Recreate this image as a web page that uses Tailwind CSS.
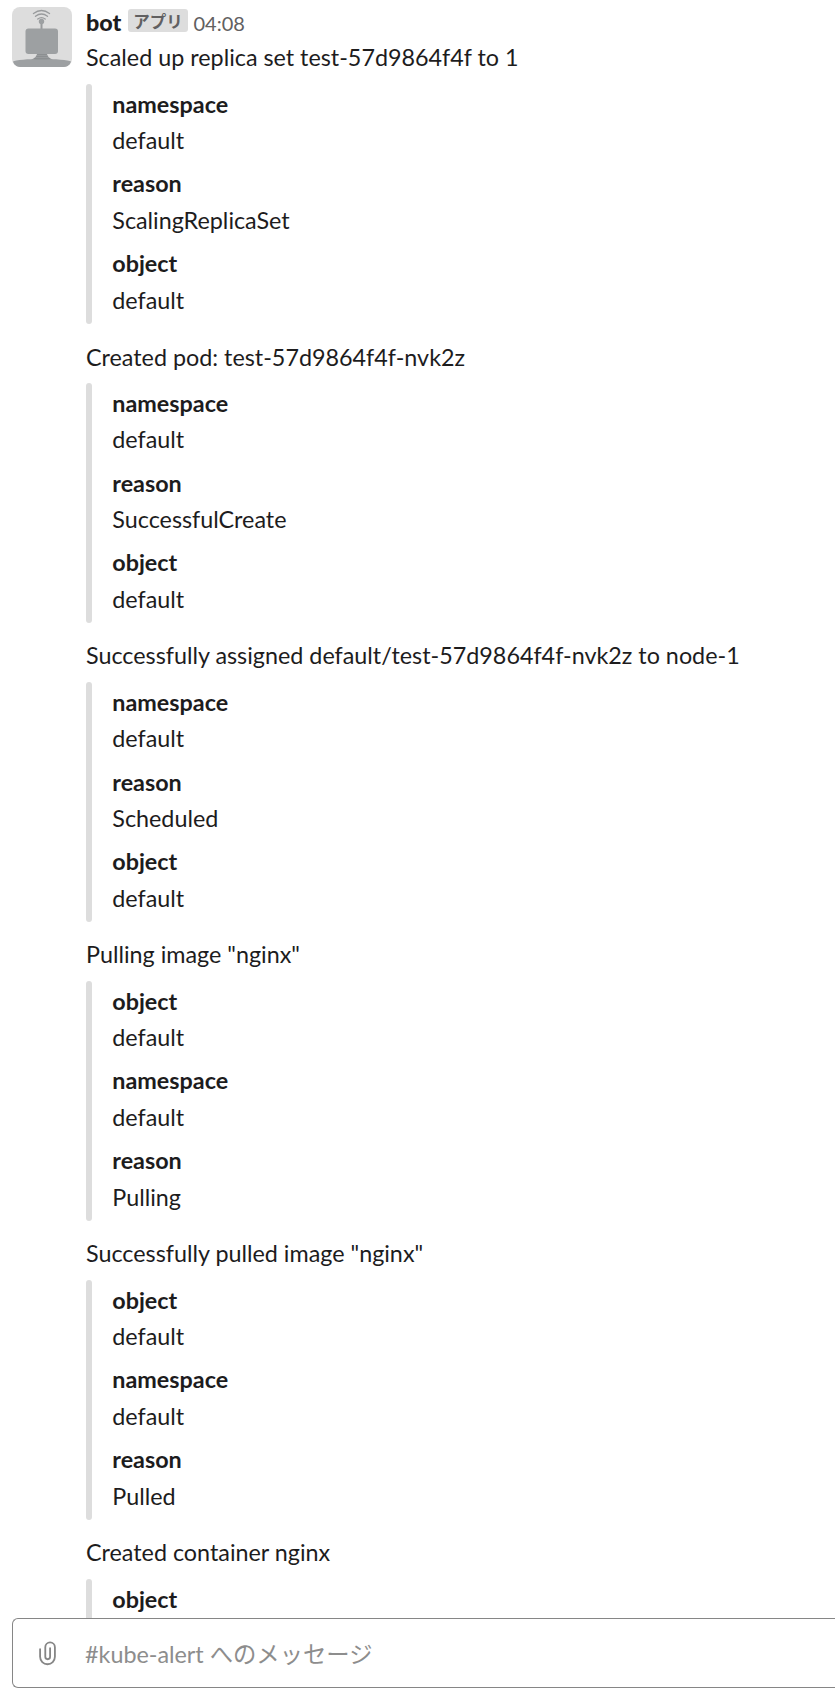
<!DOCTYPE html>
<html lang="ja">
<head>
<meta charset="utf-8">
<title>kube-alert</title>
<script src="https://cdn.jsdelivr.net/npm/@tailwindcss/browser@4"></script>
</head>
<body class="bg-white">
<div class="flex h-[1708px] w-[835px] flex-col overflow-hidden font-['Lato','Noto_Sans_CJK_JP',sans-serif] text-[23.33px] leading-[33px] text-[#1d1c1d]">
  <main class="flex h-[1618px] shrink-0 gap-3.5 overflow-hidden pl-3 pt-[7px]">
    <svg class="size-[60px] shrink-0 rounded-lg bg-[#dddddd]" viewBox="0 0 60 60" fill="none">
      <g stroke="#999b9d" stroke-width="1.3" stroke-linecap="round">
        <path d="M21.500 6.500Q29.500 .500 37.500 6.500M23.500 9.300Q29.500 4.700 35.500 9.300M25.800 12Q29.500 9.200 33.200 12"/>
        <path d="M29.500 14v9" stroke-width="2"/>
      </g>
      <circle cx="29.500" cy="14.500" r="2.700" fill="#9da0a2"/>
      <rect x="13.500" y="21.500" width="32.500" height="25.500" rx="3" fill="#9da0a2"/>
      <path d="M1 54.500C5 51 54 51 59 54.500C58.500 57 56.500 59 54 60H6C3.500 59 1.500 57 1 54.500Z" fill="#9da0a2"/>
      <path d="M25 47H35C35.500 50 38 51.500 41 52.500H19C22 51.500 24.500 50 25 47Z" fill="#8c8f91"/>
      <path d="M24.500 48.500h11M23 50.500h14" stroke="#a3a5a7" stroke-width=".6"/>
    </svg>
    <div class="flex-1" id="feed">
      <div class="flex h-[34px] items-start">
        <b class="-mt-[1px] w-[35px] text-[23.33px] font-black">bot</b>
        <span class="ml-[7px] mt-[2px] flex h-[23px] w-[60px] items-center justify-center rounded-[3px] bg-[#dddddd] pt-[3px] text-[16.5px] font-bold text-[#616061]">アプリ</span>
        <time class="ml-[5.5px] text-[20px] text-[#616061]">04:08</time>
      </div>
    </div>
  </main>
  <footer class="ml-3 flex h-[70px] shrink-0 items-center rounded-l-[6px] border border-r-0 border-[#868686] text-[#8d8d8d]">
    <svg class="ml-[25px] mt-[1px] h-[25px] w-[19px]" viewBox="0 0 19 26" fill="none" stroke="#868686" stroke-width="1.900" stroke-linecap="round"><path d="M1.800 8.500V16.500a7.700 7.700 0 0 0 15.400 0V6.500a5 5 0 0 0-10 0V16.500a2.500 2.500 0 0 0 5 0V7.500"/></svg>
    <span class="ml-[28px] mt-[2px]">#kube-alert へのメッセージ</span>
  </footer>
</div>
<script>
  const messages = [
    ['Scaled up replica set test-57d9864f4f to 1', [['namespace','default'],['reason','ScalingReplicaSet'],['object','default']]],
    ['Created pod: test-57d9864f4f-nvk2z', [['namespace','default'],['reason','SuccessfulCreate'],['object','default']]],
    ['Successfully assigned default/test-57d9864f4f-nvk2z to node-1', [['namespace','default'],['reason','Scheduled'],['object','default']]],
    ['Pulling image "nginx"', [['object','default'],['namespace','default'],['reason','Pulling']]],
    ['Successfully pulled image "nginx"', [['object','default'],['namespace','default'],['reason','Pulled']]],
    ['Created container nginx', [['object','']]]
  ];
  const tight = { rows: ['h-[79px]', 'h-[80px]', 'h-[80px]'], gaps: ['mt-[3px]', 'mt-[4px]', 'mt-[4px]'] };
  const even = { rows: ['h-[80px]', 'h-[79px]', 'h-[80px]'], gaps: ['mt-[3px]', 'mt-[3px]', 'mt-[4px]'] };
  document.getElementById('feed').insertAdjacentHTML('beforeend', messages.map(([text, fields], n) => {
    const { rows, gaps } = n === 1 || n === 2 ? even : tight;
    return `
    <article class="h-[299px]">
      <p class="${n === 1 ? 'pt-px mb-[9px]' : 'mb-[10px]'}">${text}</p>
      <div class="flex h-[240px] gap-5">
        <div class="w-1.5 rounded-full bg-[#dddddd]"></div>
        <dl class="pl-[.3px] pt-[4px]">${fields.map(([k, v], i) => `
          <div class="${rows[i]}"><dt class="font-bold">${k}</dt><dd class="${gaps[i]}">${v}</dd></div>`).join('')}
        </dl>
      </div>
    </article>`;
  }).join(''));
</script>
</body>
</html>
